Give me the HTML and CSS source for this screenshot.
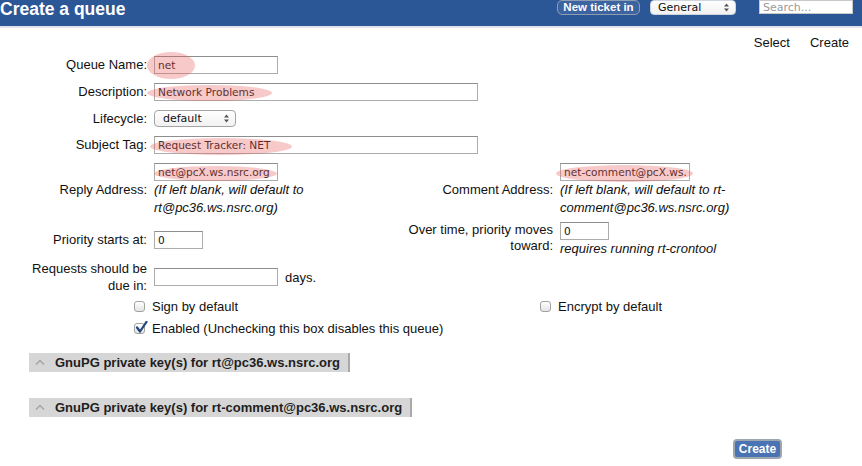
FILE: index.html
```html
<!DOCTYPE html>
<html lang="en">
<head>
<meta charset="utf-8">
<title>Create a queue</title>
<link rel="stylesheet" href="styles.css">
</head>
<body>
<header class="topbar">
  <h1 class="title">Create a queue</h1>
  <div class="tools">
    <span class="btn-newticket">New ticket in</span>
    <div class="select select-queue"><span>General</span><svg class="arrows" width="5" height="9" viewBox="0 0 5 9"><path d="M0 3.5 L2.5 0.5 L5 3.5 Z M0 5.5 L2.5 8.5 L5 5.5 Z" fill="#555"/></svg></div>
    <input class="search" type="text" placeholder="Search...">
  </div>
</header>

<nav class="pagemenu">
  <a class="menuitem">Select</a>
  <a class="menuitem">Create</a>
</nav>

<form class="queueform">
  <div class="row">
    <label class="label">Queue Name:</label>
    <div class="value"><span class="field"><input class="text w124" type="text" value="net"><span class="mark mark-name"></span></span></div>
  </div>

  <div class="row">
    <label class="label">Description:</label>
    <div class="value span3"><span class="field"><input class="text w324" type="text" value="Network Problems"><span class="mark mark-desc"></span></span></div>
  </div>

  <div class="row">
    <label class="label">Lifecycle:</label>
    <div class="value"><div class="select select-life"><span>default</span><svg class="arrows" width="5" height="9" viewBox="0 0 5 9"><path d="M0 3.5 L2.5 0.5 L5 3.5 Z M0 5.5 L2.5 8.5 L5 5.5 Z" fill="#555"/></svg></div></div>
  </div>

  <div class="row">
    <label class="label">Subject Tag:</label>
    <div class="value span3"><span class="field"><input class="text w324" type="text" value="Request Tracker: NET"><span class="mark mark-subject"></span></span></div>
  </div>

  <div class="row row-reply">
    <label class="label">Reply Address:</label>
    <div class="value stack">
      <span class="field"><input class="text w124" type="text" value="net@pcX.ws.nsrc.org"><span class="mark mark-reply"></span></span>
      <span class="hint">(If left blank, will default to rt@pc36.ws.nsrc.org)</span>
    </div>
    <label class="label">Comment Address:</label>
    <div class="value stack">
      <span class="field"><input class="text w130" type="text" value="net-comment@pcX.ws.nsrc.org"><span class="mark mark-comment"></span></span>
      <span class="hint hint-narrow">(If left blank, will default to rt-comment@pc36.ws.nsrc.org)</span>
    </div>
  </div>

  <div class="row row-priority">
    <label class="label">Priority starts at:</label>
    <div class="value"><input class="text w49" type="text" value="0"></div>
    <label class="label label-top">Over time, priority moves<br>toward:</label>
    <div class="value stack">
      <input class="text w49" type="text" value="0">
      <span class="hint">requires running rt-crontool</span>
    </div>
  </div>

  <div class="row row-due">
    <label class="label label-two">Requests should be<br>due in:</label>
    <div class="value inline"><input class="text w124" type="text" value=""><span class="unit">days.</span></div>
  </div>

  <div class="row row-check">
    <label class="check col2"><span class="box"></span>Sign by default</label>
    <label class="check col4"><span class="box"></span>Encrypt by default</label>
  </div>

  <div class="row row-check row-check2">
    <label class="check col2"><span class="box"><svg class="tick" width="13" height="13" viewBox="0 0 13 13"><path d="M2 6.5 L5 10.5 L11.5 0.8" fill="none" stroke="#24467f" stroke-width="2.2" stroke-linecap="round" stroke-linejoin="round"/></svg></span>Enabled (Unchecking this box disables this queue)</label>
  </div>

  <div class="keybar keybar-first">
    <svg class="chev" width="10" height="7" viewBox="0 0 10 7"><path d="M1 5.5 L5 1.5 L9 5.5" fill="none" stroke="#a3a3a3" stroke-width="1.4"/></svg>
    <span>GnuPG private key(s) for rt@pc36.ws.nsrc.org</span>
  </div>

  <div class="keybar keybar-second">
    <svg class="chev" width="10" height="7" viewBox="0 0 10 7"><path d="M1 5.5 L5 1.5 L9 5.5" fill="none" stroke="#a3a3a3" stroke-width="1.4"/></svg>
    <span>GnuPG private key(s) for rt-comment@pc36.ws.nsrc.org</span>
  </div>

  <div class="actions">
    <button class="btn-create" type="button">Create</button>
  </div>
</form>
</body>
</html>
```

FILE: styles.css
```css
* { box-sizing: border-box; }

body {
  margin: 0;
  font-family: "Liberation Sans", Arial, Helvetica, sans-serif;
  font-size: 13px;
  color: #111;
  background: #fff;
}

/* ---------- top bar ---------- */
.topbar {
  height: 28px;
  background: #2b5797;
  border-bottom: 2px solid #e1e4e9;
  display: flex;
  justify-content: space-between;
  align-items: flex-start;
}

.title {
  margin: -1px 0 0 0;
  color: #fff;
  font-size: 17.5px;
  line-height: 20px;
  font-weight: bold;
}

.tools {
  display: flex;
  align-items: flex-start;
  padding-right: 9px;
}

.btn-newticket {
  display: block;
  width: 83px;
  height: 15px;
  margin-right: 10px;
  border: 1px solid #8f9db3;
  border-radius: 5px;
  background: #3c64a0;
  color: #fff;
  font-weight: bold;
  font-size: 11.5px;
  line-height: 13px;
  text-align: center;
}

.select {
  display: flex;
  align-items: center;
  justify-content: space-between;
  background: linear-gradient(#ffffff, #f1f1f1);
  border: 1px solid #a4a4a4;
  border-radius: 4px;
  font-family: "DejaVu Sans", sans-serif;
  font-size: 11px;
  color: #111;
}

.select-queue {
  width: 86px;
  height: 15px;
  padding: 0 6px 0 7px;
  margin-right: 23px;
  border-color: #cfd5de;
}

.search {
  width: 94px;
  height: 14px;
  margin: 0;
  padding: 0 3px;
  border: 1px solid #c9c9c9;
  background: #fff;
  font-family: "DejaVu Sans", sans-serif;
  font-size: 11px;
}
.search::placeholder { color: #9a9a9a; }

/* ---------- page menu ---------- */
.pagemenu {
  display: flex;
  justify-content: flex-end;
  gap: 20px;
  padding-right: 13px;
  margin-top: 8px;
  line-height: 14px;
}
.menuitem { color: #111; }

/* ---------- form ---------- */
.queueform { margin-top: 6px; }

.row {
  display: grid;
  grid-template-columns: 147px 244px 148px 1fr;
  column-gap: 7px;
  align-items: center;
}
.row + .row { margin-top: 9px; }

.label {
  text-align: right;
  white-space: nowrap;
  line-height: 16px;
}

.value { min-width: 0; }
.span3 { grid-column: 2 / 5; }

.stack {
  display: flex;
  flex-direction: column;
  align-items: flex-start;
}

.inline {
  display: flex;
  align-items: center;
}

.field {
  position: relative;
  display: inline-block;
  vertical-align: top;
}

.text {
  display: block;
  height: 18px;
  margin: 0;
  padding: 0 3px;
  border: 1px solid #acacac;
  border-top-color: #8e8e8e;
  background: #fff;
  font-family: "DejaVu Sans", sans-serif;
  font-size: 10.6px;
  color: #161616;
}
.w124 { width: 124px; }
.w130 { width: 130px; }
.w324 { width: 324px; }
.w49  { width: 49px; }

/* highlight annotations drawn over the inputs */
.mark {
  position: absolute;
  border-radius: 50%;
  background: rgba(232, 92, 92, 0.33);
  pointer-events: none;
  filter: blur(0.6px);
}
.mark-name    { left: -7px; top: -4px; width: 48px;  height: 27px; }
.mark-desc    { left: -7px; top: 2px;  width: 125px; height: 16px; }
.mark-subject { left: -4px; top: 2px;  width: 142px; height: 17px; }
.mark-reply   { left: 0;    top: 3px;  width: 123px; height: 15px; }
.mark-comment { left: -4px; top: 2px;  width: 137px; height: 17px; }

.select-life {
  width: 82px;
  height: 17px;
  padding: 0 6px 0 8px;
}

.hint {
  font-style: italic;
  line-height: 18px;
}
.hint-narrow { max-width: 200px; }

.row-priority { margin-top: 5px !important; }
.label-top { align-self: start; }

.row-due { margin-top: 2px !important; }
.label-two { line-height: 17px; }
.unit { margin-left: 7px; }

.row-check {
  margin-top: 3px !important;
  height: 18px;
}
.row-check2 { margin-top: 4px !important; }

.check {
  display: flex;
  align-items: center;
  gap: 7px;
  margin-left: -20px;
  white-space: nowrap;
}
.col2 { grid-column: 2; }
.col4 { grid-column: 4; }

.box {
  position: relative;
  flex: none;
  width: 11px;
  height: 11px;
  border: 1px solid #a2a2a2;
  border-radius: 3px;
  background: linear-gradient(#ffffff, #e4e4e4);
}
.tick {
  position: absolute;
  left: 0;
  top: -3px;
}

/* ---------- key bars ---------- */
.keybar {
  display: flex;
  align-items: center;
  width: fit-content;
  height: 19px;
  margin-left: 29px;
  padding: 0 8px 0 6px;
  gap: 10px;
  background: #d6d6d6;
  border-right: 2px solid #a9a9a9;
  font-weight: bold;
  color: #1e1e1e;
}
.keybar-first { margin-top: 16px; }
.keybar-second { margin-top: 26px; }

/* ---------- actions ---------- */
.actions {
  display: flex;
  justify-content: flex-end;
  padding-right: 80px;
  margin-top: 22px;
}

.btn-create {
  width: 49px;
  height: 20px;
  padding: 0;
  border: 2px solid #9ea6b1;
  border-radius: 4px;
  background: #4a73b3;
  color: #fff;
  font-family: "Liberation Sans", Arial, sans-serif;
  font-weight: bold;
  font-size: 12px;
}
```
